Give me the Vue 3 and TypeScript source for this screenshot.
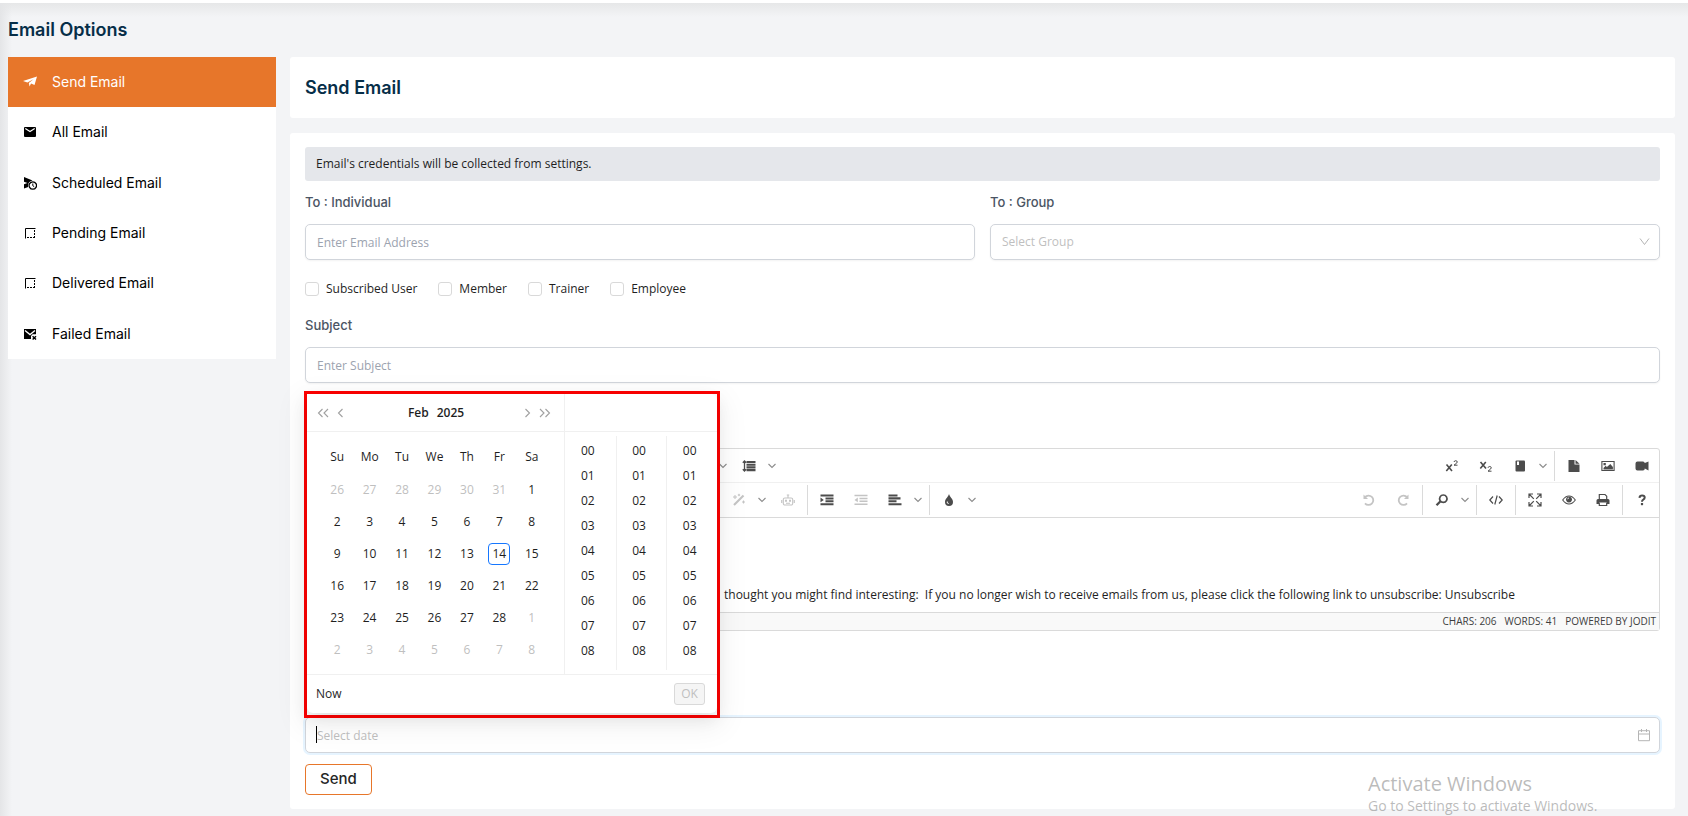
<script setup lang="ts">
import { h, ref } from 'vue'

interface Shape { d: string; line?: number; light?: boolean }

const shapes: Record<string, Shape[]> = {
  plane: [{ d: 'M0 6 L14 1.5 L11.5 10 L8 8.6 L6.6 11.5 L5.8 8 L10.5 4.2 L4.4 7.4 Z' }],
  mail: [{ d: 'M2 2h10a1 1 0 0 1 1 1v8a1 1 0 0 1-1 1H2a1 1 0 0 1-1-1V3a1 1 0 0 1 1-1z' }, { d: 'M2.300 3.600 L7 6.500 L11.700 3.600', line: 1.2, light: true }],
  scheduled: [
    { d: 'M1 1 L9.500 4.600 C6.500 5.3 5 7 5 9.5 C5 10.2 5 10.6 5.2 11 L1 12.5 V8.2 L4.5 7 L1 5.8Z' },
    { d: 'M9.8 5.8a3.7 3.7 0 1 0 .01 0z', line: 1.3 },
    { d: 'M9.8 7.5v2.2l1.4 1', line: 1 },
  ],
  failed: [
    { d: 'M1 2h12v5.2H9.6L8 9v3H1z' },
    { d: 'M2 3.6 L7 7.6 L12 3.6', line: 1.3, light: true },
    { d: 'M9.6 9.2l3.4 3.4M13 9.2l-3.4 3.4', line: 1.4 },
  ],
  lineheight: [{ d: 'M2.500 2v10M.8 3.8L2.500 2l1.7 1.8M.8 10.2L2.500 12l1.7-1.8', line: 1.3 }, { d: 'M4.500 3h9M4.500 5.7h9M4.500 8.400h9M4.500 11.100h9', line: 2.100 }],
  chevron: [{ d: 'M3.5 5l3.5 3.5L10.5 5', line: 1.1 }],
  sup: [{ d: 'M1.5 5.5l5.5 6.5M6.8 5.5L1.3 12', line: 1.6 }, { d: 'M9 3q.3-1.3 1.7-1.3T12.3 3Q12.3 4 9 6.2h3.5', line: 1 }],
  sub: [{ d: 'M1.5 3l5.5 6.5M6.8 3L1.3 9.5', line: 1.6 }, { d: 'M9 8.8q.3-1.3 1.7-1.3T12.3 8.8q0 1-3.3 3.4h3.5', line: 1 }],
  book: [{ d: 'M3.5 1.5h7.5a1 1 0 0 1 1 1v9a1 1 0 0 1-1 1H3.5a1 1 0 0 1-1-1v-9a1 1 0 0 1 1-1z' }, { d: 'M5 2.5v3.5', line: 2, light: true }],
  file: [{ d: 'M1.5 1h6v4.5H12.5V13H1.5z' }, { d: 'M8.5 1l4 3.8h-4z' }],
  image: [{ d: 'M.9 2.5h12.2v9H.9z', line: 1.1 }, { d: 'M2.5 10.5V9l2.2-2.2 1.2 1.2L9.3 5l2.6 3v2.5zM2.5 4h2.3v2.3H2.5z' }],
  video: [{ d: 'M2.5 2.500h5.5a2 2 0 0 1 1.8 1.5L13.5 2.5v9L9.8 9.500A2 2 0 0 1 8 11.500H2.5a2 2 0 0 1-2-2V4.500a2 2 0 0 1 2-2z' }],
  wand: [{ d: 'M2 12L11.5 2.5', line: 2.2 }, { d: 'M3 2v4M1 4h4M7 .8v2.4M5.8 2h2.4M11.5 7.5v3M10 9h3', line: 1 }],
  robot: [{ d: 'M3.8 5h6.4a1.5 1.5 0 0 1 1.5 1.5v4a1.5 1.5 0 0 1-1.5 1.5H3.8a1.5 1.5 0 0 1-1.5-1.500v-4A1.5 1.5 0 0 1 3.8 5zM7 5V2.5M5.8 2h2.4M.7 7v3M13.3 7v3M5 10.2h4', line: 1.1 }, { d: 'M4 6.7h2v2H4zM8 6.7h2v2H8z' }],
  indent: [{ d: 'M.5 2.5h13M5.5 5.5h8M5.5 8.3h8M.5 11.2h13', line: 1.9 }, { d: 'M.5 4.6L3.8 7 .5 9.3z' }],
  outdent: [{ d: 'M.5 2.5h13M5.5 5.5h8M5.5 8.3h8M.5 11.2h13', line: 1.6 }, { d: 'M3.8 4.6L.5 7l3.3 2.3z' }],
  align: [{ d: 'M.5 2.5h9M.5 5.4h12M.5 8.3h8M.5 11.2h13', line: 2.1 }],
  drop: [{ d: 'M7 1C6.3 4 3 5.7 3 9a4 4 0 0 0 8 0C11 5.7 7.7 4 7 1z' }, { d: 'M5.3 8.5a1.5 1.5 0 0 0 1.4 2', line: 1, light: true }],
  undo: [{ d: 'M3 4.2A4.700 4.700 0 1 1 3 10.3', line: 1.8 }, { d: 'M1.5 1.5V6H6z' }],
  redo: [{ d: 'M11 4.2A4.700 4.700 0 1 0 11 10.3', line: 1.8 }, { d: 'M12.5 1.5V6H8z' }],
  search: [{ d: 'M8.3 2a3.7 3.7 0 1 0 .01 0z', line: 1.7 }, { d: 'M5.5 8.3L1.5 12.3', line: 2.3 }],
  source: [{ d: 'M4 3.5L.8 7 4 10.5M10 3.5L13.2 7 10 10.5M8.2 2.5L5.8 11.5', line: 1.2 }],
  full: [{ d: 'M1 5V1h4M9 1h4v4M13 9v4H9M5 13H1V9M1 1l4.8 4.8M13 1L8.2 5.8M13 13L8.2 8.2M1 13l4.8-4.8', line: 1.2 }],
  eye: [{ d: 'M.7 7Q3.5 3 7 3t6.3 4Q10.5 11 7 11T.7 7z', line: 1.1 }, { d: 'M7 3.6a3 3 0 1 0 .01 0z' }, { d: 'M5.5 6.3Q5.7 5 7 5', line: 0.8, light: true }],
  print: [{ d: 'M3.3 7V1.5h5.7L10.7 3.2V7', line: 1.2 }, { d: 'M2 6h10a1.5 1.5 0 0 1 1.5 1.5V11h-2.500V9.5H3V11H.5V7.5A1.5 1.5 0 0 1 2 6z' }, { d: 'M3.3 9.5v3h7.4v-3', line: 1.2 }],
  help: [{ d: 'M4.5 4.8Q4.7 2.5 7.1 2.5q2.6 0 2.6 2.1 0 1.3-1.4 2Q7 7.3 7 8.8', line: 2 }, { d: 'M5.9 10h2.2v2.2H5.9z' }],
  calendar: [{ d: 'M1.5 2.700h11v10h-11zM1.5 6h11M4.5 1v3M9.5 1v3', line: 1 }],
  down: [{ d: 'M3 3.500L7.500 9.500l4.500-6', line: 1 }],
  left: [{ d: 'M8.5 3L4.5 7l4 4', line: 1.100 }],
  right: [{ d: 'M5.5 3l4 4-4 4', line: 1.100 }],
  first: [{ d: 'M6.5 3l-4 4 4 4M12 3l-4 4 4 4', line: 1.100 }],
  last: [{ d: 'M2 3l4 4-4 4M7.5 3l4 4-4 4', line: 1.100 }],
}

const Icon = (props: { name: string }) =>
  h('svg', { viewBox: '0 0 14 14', width: 14, height: 14, 'aria-hidden': 'true' },
    props.name === 'dashed'
      ? [h('path', { d: 'M2.500 12.5V2.500H12.500', fill: 'none', stroke: 'currentColor', 'stroke-width': 1 }),
         h('path', { d: 'M11.500 4v9M4 11.500h9', fill: 'none', stroke: 'currentColor', 'stroke-width': 1, 'stroke-dasharray': '2 1' })]
      : (shapes[props.name] ?? []).map((s) =>
          h('path', {
            d: s.d,
            fill: s.line ? 'none' : 'currentColor',
            stroke: s.line ? (s.light ? '#fff' : 'currentColor') : 'none',
            'stroke-width': s.line ?? 0,
          })))
Icon.props = ['name']

const active = ref('Send Email')
const menu = [
  { label: 'Send Email', icon: 'plane' },
  { label: 'All Email', icon: 'mail' },
  { label: 'Scheduled Email', icon: 'scheduled' },
  { label: 'Pending Email', icon: 'dashed' },
  { label: 'Delivered Email', icon: 'dashed' },
  { label: 'Failed Email', icon: 'failed' },
]
const audiences = ['Subscribed User', 'Member', 'Trainer', 'Employee']

interface Tool { icon: string; title: string; off?: boolean; sep?: boolean }
const t = (icon: string, title: string, off = false): Tool => ({ icon, title, off })
const sep: Tool = { icon: '', title: '', sep: true }
const more = t('chevron', 'More options')
const rows = [
  {
    start: [more, t('lineheight', 'Line height'), more],
    end: [t('sup', 'Superscript'), t('sub', 'Subscript'), t('book', 'Insert class'), more, sep,
      t('file', 'Insert file'), t('image', 'Insert image'), t('video', 'Insert video')],
  },
  {
    start: [t('wand', 'AI commands', true), more, t('robot', 'AI assistant', true), sep,
      t('indent', 'Increase indent'), t('outdent', 'Decrease indent', true), t('align', 'Align'), more, sep,
      t('drop', 'Colour'), more],
    end: [t('undo', 'Undo', true), t('redo', 'Redo', true), sep, t('search', 'Find'), more, sep,
      t('source', 'Source'), sep, t('full', 'Full size'), t('eye', 'Preview'), t('print', 'Print'), sep, t('help', 'About')],
  },
]

const weekdays = ['Su', 'Mo', 'Tu', 'We', 'Th', 'Fr', 'Sa']
const firstCell = new Date(2025, 0, 26)
const weeks = Array.from({ length: 6 }, (_, w) =>
  Array.from({ length: 7 }, (_, d) => {
    const date = new Date(firstCell.getFullYear(), firstCell.getMonth(), firstCell.getDate() + w * 7 + d)
    const inMonth = date.getMonth() === 1
    return { day: date.getDate(), inMonth, today: inMonth && date.getDate() === 14 }
  }))
const units = ['Hours', 'Minutes', 'Seconds']
const ticks = Array.from({ length: 9 }, (_, i) => String(i).padStart(2, '0'))
</script>

<template>
  <div class="page">
    <h1 class="page-title">Email Options</h1>
    <div class="layout">
      <nav class="menu" aria-label="Email options">
        <a v-for="m in menu" :key="m.label" href="#" :class="{ active: active === m.label }" @click.prevent="active = m.label">
          <Icon :name="m.icon" />{{ m.label }}
        </a>
      </nav>

      <main class="main">
        <header class="card head"><h2>Send Email</h2></header>

        <form class="card form" @submit.prevent>
          <p class="notice">Email's credentials will be collected from settings.</p>

          <div class="pair">
            <div class="field">
              <label for="to">To : Individual</label>
              <input id="to" class="control" type="email" placeholder="Enter Email Address">
            </div>
            <div class="field">
              <label for="group">To : Group</label>
              <div class="select-wrap">
                <select id="group" class="control"><option>Select Group</option></select>
                <Icon name="down" class="inner-icon" />
              </div>
            </div>
          </div>

          <div class="checks">
            <label v-for="a in audiences" :key="a"><input type="checkbox">{{ a }}</label>
          </div>

          <div class="field">
            <label for="subject">Subject</label>
            <input id="subject" class="control" type="text" placeholder="Enter Subject">
          </div>

          <section class="editor" aria-label="Email body">
            <div v-for="(row, r) in rows" :key="r" class="toolbar" :class="'row-' + r">
              <div v-for="(side, s) in [row.start, row.end]" :key="s" class="tools">
                <template v-for="(tool, i) in side" :key="i">
                  <span v-if="tool.sep" class="sep"></span>
                  <button v-else type="button" :aria-label="tool.title" :disabled="tool.off" :class="{ more: tool.icon === 'chevron' }">
                    <Icon :name="tool.icon" />
                  </button>
                </template>
              </div>
            </div>
            <div class="content" contenteditable="true"><p>thought you might find interesting:&nbsp; If you no longer wish to receive emails from us, please click the following link to unsubscribe: Unsubscribe</p></div>
            <div class="status"><span>CHARS: 206</span><span>WORDS: 41</span><a href="#">POWERED BY JODIT</a></div>
          </section>

          <div class="date-field">
            <input class="control focused" type="text" placeholder="Select date" aria-label="Select date">
            <span class="caret"></span>
            <Icon name="calendar" class="inner-icon" />

            <div class="popup" role="dialog" aria-label="Choose date and time">
              <div class="panel">
                <div class="datetime">
                  <div class="date-panel">
                    <div class="cal-head">
                      <button type="button" aria-label="Previous year"><Icon name="first" /></button>
                      <button type="button" aria-label="Previous month"><Icon name="left" /></button>
                      <div class="cal-title"><button type="button">Feb</button><button type="button">2025</button></div>
                      <button type="button" aria-label="Next month"><Icon name="right" /></button>
                      <button type="button" aria-label="Next year"><Icon name="last" /></button>
                    </div>
                    <table>
                      <thead><tr><th v-for="w in weekdays" :key="w" scope="col">{{ w }}</th></tr></thead>
                      <tbody>
                        <tr v-for="(week, wi) in weeks" :key="wi">
                          <td v-for="(c, ci) in week" :key="ci">
                            <button type="button" :class="{ faded: !c.inMonth, today: c.today }">{{ c.day }}</button>
                          </td>
                        </tr>
                      </tbody>
                    </table>
                  </div>
                  <div class="time-panel">
                    <div class="cal-head"></div>
                    <div class="time-cols">
                      <ul v-for="u in units" :key="u" :aria-label="u">
                        <li v-for="n in ticks" :key="n"><button type="button">{{ n }}</button></li>
                      </ul>
                    </div>
                  </div>
                </div>
                <div class="cal-foot">
                  <a href="#">Now</a>
                  <button type="button" disabled>OK</button>
                </div>
              </div>
            </div>
          </div>

          <button class="send" type="submit">Send</button>
        </form>
      </main>
    </div>

    <aside class="watermark">
      <strong>Activate Windows</strong>
      <span>Go to Settings to activate Windows.</span>
    </aside>
  </div>
</template>

<style>
html, body { background: #f3f4f6; overflow-x: hidden; }
</style>

<style scoped>
* { box-sizing: border-box; }
.page {
  position: relative;
  min-height: 100vh;
  padding: 16px 13px 7px 8px;
  border-top: 3px solid #fff;
  overflow: hidden;
  font: 12px/20px "Open Sans", "Noto Sans", sans-serif;
  color: #1f1f1f;
  background:
    linear-gradient(90deg, #e4e5e7, transparent 12px),
    linear-gradient(180deg, #e6e7e8, transparent 14px),
    #f3f4f6;
}
h1, h2, p, ul { margin: 0; padding: 0; }
h1, h2 { font: 600 18px/22px Inter, sans-serif; color: #062e48; }
button, input, select { font: inherit; color: inherit; margin: 0; }
button { padding: 0; border: 0; background: none; }
a { color: inherit; text-decoration: none; }
svg { display: block; flex: none; }
.layout { display: grid; grid-template-columns: 268px minmax(0, 1fr); gap: 14px; align-items: start; margin-top: 16px; }
.menu { display: grid; grid-auto-rows: 1fr; min-height: 302px; background: #fff; }
.menu a { display: flex; align-items: center; gap: 15px; padding: 0 15px; font: 14px/20px Inter, sans-serif; color: #000; }
.menu a.active { background: #e7762a; color: #fff; }
.main { display: flex; flex-direction: column; gap: 15px; }
.card { background: #fff; border-radius: 3px; }
.head { padding: 20px 15px 19px; }
.form { display: flex; flex-direction: column; padding: 14px 15px; }
.notice { padding: 7px 11px; border-radius: 3px; background: #e5e7eb; }
.pair { display: grid; grid-template-columns: 1fr 1fr; gap: 15px; margin-top: 11px; }
.field { display: flex; flex-direction: column; gap: 12px; }
.field > label { font: 500 13px/20px Inter, sans-serif; color: #4b5563; }
.control {
  display: block; width: 100%; height: 36px; padding: 0 11px;
  border: 1px solid #d1d5db; border-radius: 5px; background: #fff;
  box-shadow: 0 1px 2px rgba(0, 0, 0, .05); outline: 0; appearance: none;
}
.control::placeholder { color: #9ca3af; opacity: 1; }
select.control { color: #bfbfbf; }
.select-wrap, .date-field { position: relative; }
.inner-icon { position: absolute; right: 9px; top: 11px; color: #b5b5b5; }
.checks { display: flex; gap: 21px; margin: 19px 0 16px; }
.checks label { display: flex; align-items: center; gap: 7px; }
.checks input { width: 14px; height: 14px; appearance: none; border: 1px solid #d9d9d9; border-radius: 3px; background: #fff; }
.editor { margin-top: 65px; border: 1px solid #dadada; border-radius: 3px; }
.toolbar { display: flex; justify-content: space-between; height: 34px; }
.row-0 { padding-left: 411px; border-bottom: 1px solid #f0f0f0; }
.row-1 { padding-left: 416px; border-bottom: 1px solid #dadada; height: 35px; }
.tools { display: flex; align-items: center; }
.tools button { display: grid; place-items: center; width: 34px; height: 32px; color: #4c4c4c; }
.tools button:disabled { color: #c4c4c4; }
.tools button.more { width: 12px; margin-right: 3px; color: #8c8c8c; justify-content: center; }
.sep { width: 1px; height: 30px; margin: 0 2px; background: #dadada; }
.content { height: 94px; padding: 67px 8px 0 418px; outline: 0; white-space: nowrap; overflow: hidden; }
.status {
  display: flex; justify-content: flex-end; gap: 8px; padding: 0 3px;
  border-top: 1px solid #dadada; background: #f9f9f9;
  font-size: 10px; line-height: 17px; color: #3d3d3d;
}
.date-field { margin-top: 86px; }
.focused { box-shadow: 0 0 0 2px rgba(5, 145, 255, .1); }
.focused::placeholder { color: #bfbfbf; }
.caret { position: absolute; left: 11px; top: 9px; width: 1px; height: 17px; background: #000; }
.popup { position: absolute; left: -1px; bottom: calc(100% - 1px); border: 3px solid #f00; }
.panel {
  width: 410px; margin-bottom: 2px; border-radius: 0 6px 6px 6px; background: #fff;
  box-shadow: 0 6px 16px rgba(0, 0, 0, .08), 0 9px 28px 8px rgba(0, 0, 0, .05);
}
.datetime { display: flex; border-bottom: 1px solid #f0f0f0; }
.date-panel { width: 258px; border-right: 1px solid #f0f0f0; }
.time-panel { flex: 1; }
.cal-head { display: flex; align-items: center; height: 38px; padding: 0 8px 0 9px; border-bottom: 1px solid #f0f0f0; color: #a0a0a0; }
.cal-head > button { width: 18px; }
.cal-title { display: flex; justify-content: center; gap: 8px; flex: 1; font-weight: 600; color: #1f1f1f; }
table { width: 227px; margin: 8px 14px; border-collapse: collapse; table-layout: fixed; }
th, td { height: 32px; padding: 0; font-weight: 400; text-align: center; }
thead th { height: 34px; }
td button { width: 22px; height: 22px; line-height: 20px; border: 1px solid transparent; border-radius: 4px; }
.faded { color: #bfbfbf; }
.today { border-color: #1677ff; }
.time-cols { display: grid; grid-template-columns: repeat(3, 1fr); height: 234px; margin-top: 4px; }
.time-cols ul { padding-top: 2px; list-style: none; overflow: hidden; }
.time-cols ul + ul { border-left: 1px solid #f0f0f0; }
.time-cols button { display: block; width: 100%; height: 25px; padding-right: 5px; }
.cal-foot { display: flex; align-items: center; justify-content: space-between; height: 38px; padding: 0 12px 0 9px; }
.cal-foot button { width: 31px; height: 22px; border: 1px solid #d9d9d9; border-radius: 3px; background: #f5f5f5; color: #bfbfbf; }
.send {
  align-self: flex-start; margin-top: 11px; height: 31px; padding: 0 14px 2px;
  border: 1px solid #e7762a; border-radius: 4px; background: #fff;
  font: 500 15px/26px Inter, sans-serif; color: #262626;
}
.watermark { position: absolute; right: 80px; bottom: 0; width: 240px; color: rgba(120, 120, 120, .5); pointer-events: none; white-space: nowrap; }
.watermark strong { display: block; font-size: 20px; line-height: 24px; font-weight: 400; }
.watermark span { display: block; font-size: 14px; line-height: 20px; }
</style>
